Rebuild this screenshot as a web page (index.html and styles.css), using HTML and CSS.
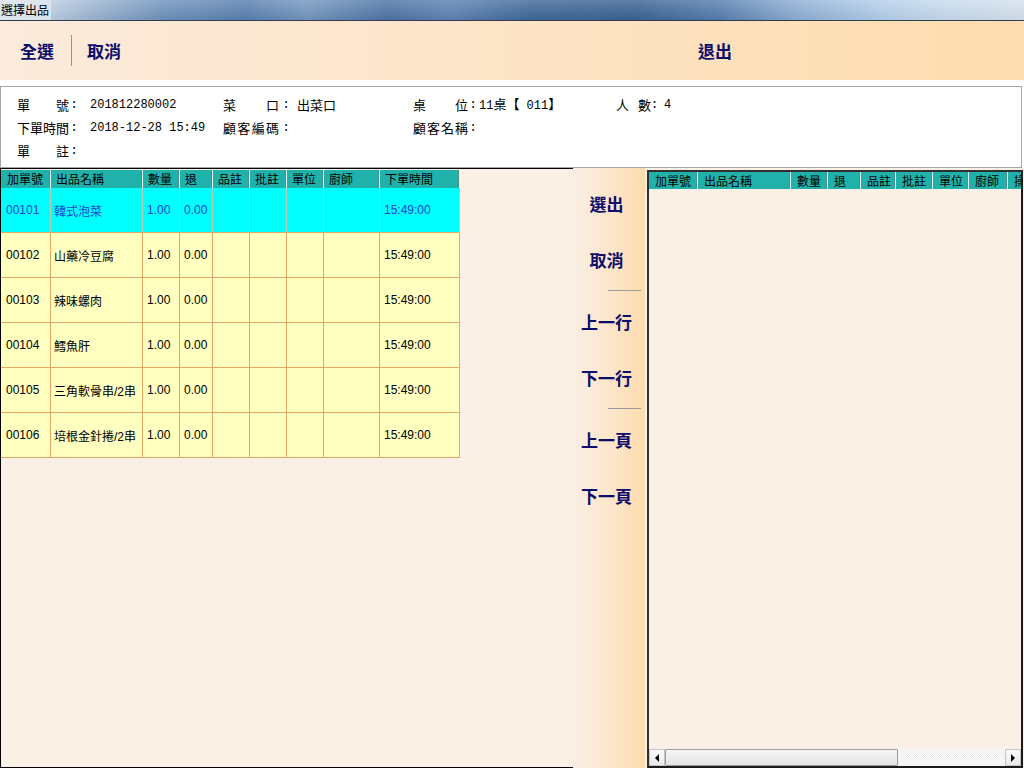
FILE: index.html
```html
<!DOCTYPE html>
<html>
<head>
<meta charset="utf-8">
<title>選擇出品</title>
<link rel="stylesheet" href="styles.css">
</head>
<body>
<div class="titlebar"><span class="title">選擇出品</span></div>

<div class="toolbar">
  <span class="tbtn">全選</span>
  <span class="tsep"></span>
  <span class="tbtn">取消</span>
  <span class="tbtn exit">退出</span>
</div>

<div class="info">
  <div class="irow">
    <div class="field f1"><span class="lbl">單 號</span><span class="colon">:</span><span class="val num">201812280002</span></div>
    <div class="field f2"><span class="lbl">菜 口</span><span class="colon">:</span><span class="val">出菜口</span></div>
    <div class="field f3"><span class="lbl">桌 位</span><span class="colon">:</span><span class="val"><span class="num">11</span>桌【<span class="num"> 011</span>】</span></div>
    <div class="field f4"><span class="lbl">人 數</span><span class="colon">:</span><span class="val num">4</span></div>
  </div>
  <div class="irow">
    <div class="field f1"><span class="lbl">下單時間</span><span class="colon">:</span><span class="val num">2018-12-28 15:49</span></div>
    <div class="field f2"><span class="lbl">顧客編碼</span><span class="colon">:</span><span class="val"></span></div>
    <div class="field f3"><span class="lbl">顧客名稱</span><span class="colon">:</span><span class="val"></span></div>
    <div class="field f4"></div>
  </div>
  <div class="irow">
    <div class="field f1"><span class="lbl">單 註</span><span class="colon">:</span><span class="val"></span></div>
  </div>
</div>

<div class="main">
  <div class="left">
    <div class="grid">
      <div class="hrow lcols">
        <span>加單號</span><span>出品名稱</span><span>數量</span><span>退</span><span>品註</span><span>批註</span><span>單位</span><span>廚師</span><span>下單時間</span>
      </div>
      <div class="brow lcols sel">
        <span>00101</span><span>韓式泡菜</span><span>1.00</span><span>0.00</span><span></span><span></span><span></span><span></span><span>15:49:00</span>
      </div>
      <div class="brow lcols">
        <span>00102</span><span>山藥冷豆腐</span><span>1.00</span><span>0.00</span><span></span><span></span><span></span><span></span><span>15:49:00</span>
      </div>
      <div class="brow lcols">
        <span>00103</span><span>辣味螺肉</span><span>1.00</span><span>0.00</span><span></span><span></span><span></span><span></span><span>15:49:00</span>
      </div>
      <div class="brow lcols">
        <span>00104</span><span>鱈魚肝</span><span>1.00</span><span>0.00</span><span></span><span></span><span></span><span></span><span>15:49:00</span>
      </div>
      <div class="brow lcols">
        <span>00105</span><span>三角軟骨串/2串</span><span>1.00</span><span>0.00</span><span></span><span></span><span></span><span></span><span>15:49:00</span>
      </div>
      <div class="brow lcols">
        <span>00106</span><span>培根金針捲/2串</span><span>1.00</span><span>0.00</span><span></span><span></span><span></span><span></span><span>15:49:00</span>
      </div>
    </div>
  </div>

  <div class="mid">
    <span class="mbtn">選出</span>
    <span class="mbtn">取消</span>
    <span class="msep"></span>
    <span class="mbtn">上一行</span>
    <span class="mbtn">下一行</span>
    <span class="msep"></span>
    <span class="mbtn">上一頁</span>
    <span class="mbtn">下一頁</span>
  </div>

  <div class="right">
    <div class="hrow rcols">
      <span>加單號</span><span>出品名稱</span><span>數量</span><span>退</span><span>品註</span><span>批註</span><span>單位</span><span>廚師</span><span>操作</span>
    </div>
    <div class="rbody"></div>
    <div class="hscroll">
      <span class="sbtn"><i class="arr-l"></i></span>
      <span class="thumb"></span>
      <span class="track"></span>
      <span class="sbtn"><i class="arr-r"></i></span>
    </div>
  </div>
</div>
</body>
</html>
```

FILE: styles.css
```css
* { box-sizing: border-box; }
html, body { margin: 0; padding: 0; }
body {
  width: 1024px;
  height: 768px;
  overflow: hidden;
  background: #ffffff;
  font-family: "Noto Sans CJK TC", sans-serif;
  color: #000;
}

/* title bar */
.titlebar {
  height: 21px;
  border-bottom: 1px solid #2c3d52;
  background:
    linear-gradient(to bottom, rgba(255,255,255,0.18), rgba(0,0,0,0.05)),
    linear-gradient(to right, #d4e0ec 0%, #c4d4e6 4%, #9db6d3 9%, #6f93bd 16%, #5a80b0 24%, #7497c0 30%, #4d74a5 38%, #5d83b3 44%, #3f6899 52%, #3a6394 62%, #557dae 70%, #8fb0d6 78%, #b4cfeb 86%, #c7dbef 92%, #d5e2ee 100%);
  display: flex;
  align-items: center;
}
.title {
  font-size: 12px;
  line-height: 20px;
  padding-left: 1px;
  padding-right: 2px;
  background: rgba(225,233,242,0.75);
}

/* toolbar */
.toolbar {
  height: 59px;
  background: linear-gradient(to right, #fbebdc 0%, #fde4c6 50%, #fedcae 100%);
  display: flex;
  align-items: center;
  padding-left: 20px;
}
.tbtn {
  font-size: 17px;
  font-weight: 700;
  color: #0c0c6c;
  line-height: 22px;
}
.tsep {
  width: 1px;
  height: 31px;
  background: #a48e7c;
  margin: 0 15px 0 17px;
}
.exit { margin-left: 577px; }

/* info box */
.info {
  margin-top: 6px;
  width: 1022px;
  height: 82px;
  border: 1px solid #a5a5a5;
  background: #fff;
  padding: 5px 0 0 16px;
  font-size: 13px;
  line-height: 24px;
}
.irow {
  display: grid;
  grid-template-columns: 206px 190px 203px auto;
  height: 23.5px;
}
.field {
  display: flex;
  align-items: center;
  white-space: nowrap;
}
.lbl {
  display: inline-block;
  width: 52px;
  text-align-last: justify;
}
.colon {
  display: inline-block;
  width: 10px;
  text-align: center;
  font-family: "Liberation Mono", monospace;
  font-size: 12px;
}
.num {
  font-family: "Liberation Mono", monospace;
  font-size: 12px;
}
.f1 .val { margin-left: 11px; }
.f2 .lbl { width: 56px; }
.f2 .colon { width: 14px; }
.f2 .val { margin-left: 4px; }
.f3 .lbl { width: 55px; }
.f3 .val { margin-left: 1px; }
.f4 .lbl { width: 35px; }
.f4 .colon { width: 6px; }
.f4 .val { margin-left: 7px; }

/* main area */
.main {
  display: flex;
  height: 600px;
  background: #faf0e6;
}
.left {
  width: 573px;
  border-left: 1px solid #000;
  border-top: 1px solid #000;
  border-bottom: 1px solid #000;
  padding-top: 1px;
  background: #faf0e6;
}
.grid { width: 459px; }

.lcols { grid-template-columns: 50px 92px 37px 33px 37px 37px 37px 56px 80px; }
.rcols { grid-template-columns: 49px 93px 37px 33px 35px 37px 36px 39px 40px; }

.hrow {
  display: grid;
  height: 18px;
  background: #20b2aa;
  overflow: hidden;
}
.hrow span {
  font-size: 12px;
  line-height: 18px;
  padding-left: 5px;
  white-space: nowrap;
  overflow: hidden;
  border-right: 1px solid #e4f3f1;
  box-shadow: inset -1px 0 0 #4f8f8b;
}
.lcols.hrow span:first-child { padding-left: 6px; }
.rcols.hrow { height: 17px; }
.rcols.hrow span { line-height: 17px; padding-left: 6px; }

.brow {
  display: grid;
  height: 45px;
  background: #ffffc0;
}
.brow span {
  display: flex;
  align-items: center;
  padding-left: 4px;
  font-family: "Liberation Sans", "Noto Sans CJK TC", sans-serif;
  font-size: 12px;
  white-space: nowrap;
  overflow: hidden;
  border-right: 1px solid #e9a664;
  border-bottom: 1px solid #e9a664;
}
.brow span:first-child { padding-left: 5px; }
.brow span:nth-child(2) { padding-left: 3px; }
.brow.sel { background: #00ffff; color: #1c3fd4; }
.brow.sel span { border-right-color: #b7c9b4; border-bottom-color: #e9a664; }

/* middle buttons */
.mid {
  width: 72px;
  background: linear-gradient(to right, #faefe4 0%, #fce6cb 50%, #fedcae 100%);
  padding-top: 7px;
  display: flex;
  flex-direction: column;
}
.mbtn {
  height: 56px;
  display: flex;
  align-items: center;
  justify-content: center;
  padding-right: 5px;
  font-size: 17px;
  font-weight: 700;
  color: #0c0c6c;
}
.msep {
  margin-left: 35px;
  width: 33px;
  height: 4px;
  border-bottom: 1px solid #9a9a9a;
  margin-bottom: 2px;
}

/* right panel */
.right {
  width: 376px;
  margin-left: 2px;
  margin-top: 2px;
  border: 2px solid #1a1a1a;
  border-top-color: #303030;
  border-left-color: #303030;
  background: #faf0e6;
  display: flex;
  flex-direction: column;
}
.rbody { flex: 1; }
.hscroll {
  height: 17px;
  display: flex;
}
.sbtn {
  width: 16px;
  background: linear-gradient(to bottom, #fbfbfb, #e9e9e9);
  border: 1px solid #c4c4c4;
  display: flex;
  align-items: center;
  justify-content: center;
}
.arr-l, .arr-r {
  width: 0;
  height: 0;
  border-top: 4px solid transparent;
  border-bottom: 4px solid transparent;
}
.arr-l { border-right: 4px solid #000; }
.arr-r { border-left: 4px solid #000; }
.thumb {
  width: 233px;
  background: linear-gradient(to bottom, #f6f6f6, #e4e4e4);
  border: 1px solid #9c9c9c;
  border-radius: 1px;
}
.track {
  flex: 1;
  background: repeating-conic-gradient(#ececec 0 25%, #fdfdfd 0 50%) 0 0 / 2px 2px;
}
```
